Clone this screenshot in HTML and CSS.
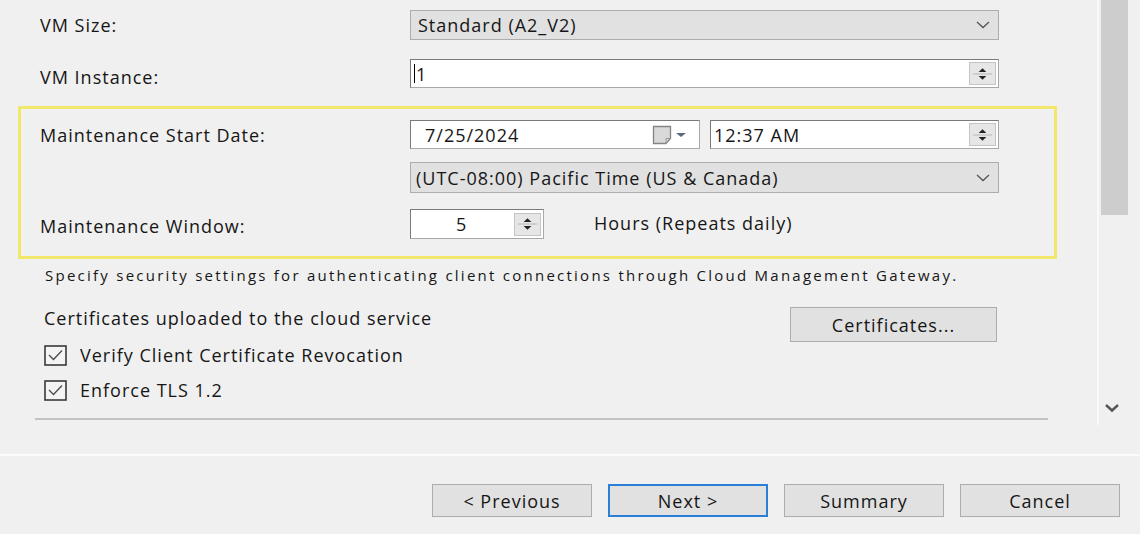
FILE: index.html
```html
<!DOCTYPE html>
<html lang="en">
<head>
<meta charset="utf-8">
<title>Cloud Management Gateway settings</title>
<link rel="stylesheet" href="styles.css">
</head>
<body>
<div class="window">
  <div class="main">
    <div class="content">
      <div class="row r-size">
        <span class="label">VM Size:</span>
        <div class="combo">
          <span class="combo-text">Standard (A2_V2)</span>
          <svg class="chev" width="14" height="8" viewBox="0 0 14 8"><polyline points="1,1 7,6.5 13,1" fill="none" stroke="#555" stroke-width="1.3"/></svg>
        </div>
      </div>
      <div class="row r-inst">
        <span class="label">VM Instance:</span>
        <div class="textbox">
          <span class="value"><span class="caret"></span>1</span>
          <div class="spin">
            <svg width="26" height="22" viewBox="0 0 26 22"><polygon points="9,9 17,9 13,5" fill="#222"/><line x1="3" y1="11" x2="23" y2="11" stroke="#b5b5b5"/><polygon points="9,13 17,13 13,17" fill="#222"/></svg>
          </div>
        </div>
      </div>
      <div class="highlight">
        <div class="row r-date">
          <span class="label">Maintenance Start Date:</span>
          <div class="datetime">
            <div class="textbox date">
              <span class="value">7/25/2024</span>
              <svg class="cal" width="40" height="22" viewBox="0 0 40 22"><path d="M1.5 2.5 H18.5 V14.5 L14 19.5 H1.5 Z" fill="#d9d9d9" stroke="#858585" stroke-width="1.3"/><path d="M14 19.5 V14.5 H18.5" fill="none" stroke="#9a9a9a"/><polygon points="24,9 34,9 29,13" fill="#5b6a82"/></svg>
            </div>
            <div class="textbox time">
              <span class="value">12:37 AM</span>
              <div class="spin">
                <svg width="26" height="22" viewBox="0 0 26 22"><polygon points="9,9 17,9 13,5" fill="#222"/><line x1="3" y1="11" x2="23" y2="11" stroke="#b5b5b5"/><polygon points="9,13 17,13 13,17" fill="#222"/></svg>
              </div>
            </div>
          </div>
        </div>
        <div class="row r-tz">
          <span class="label"></span>
          <div class="combo">
            <span class="combo-text">(UTC-08:00) Pacific Time (US &amp; Canada)</span>
            <svg class="chev" width="14" height="8" viewBox="0 0 14 8"><polyline points="1,1 7,6.5 13,1" fill="none" stroke="#555" stroke-width="1.3"/></svg>
          </div>
        </div>
        <div class="row r-win">
          <span class="label">Maintenance Window:</span>
          <div class="wingroup">
            <div class="textbox num">
              <span class="value">5</span>
              <div class="spin">
                <svg width="26" height="22" viewBox="0 0 26 22"><polygon points="9,9 17,9 13,5" fill="#222"/><line x1="3" y1="11" x2="23" y2="11" stroke="#b5b5b5"/><polygon points="9,13 17,13 13,17" fill="#222"/></svg>
              </div>
            </div>
            <span class="hours">Hours (Repeats daily)</span>
          </div>
        </div>
      </div>
      <p class="note">Specify security settings for authenticating client connections through Cloud Management Gateway.</p>
      <div class="certrow">
        <span class="certtext">Certificates uploaded to the cloud service</span>
        <button class="btn cert">Certificates...</button>
      </div>
      <div class="check c1">
        <svg class="box" width="23" height="21" viewBox="0 0 23 21"><rect x="1" y="1" width="21" height="19" fill="#f4f4f4" stroke="#3a3a3a" stroke-width="1.6"/><polyline points="5,10 9.5,14.5 18,5.5" fill="none" stroke="#4a4a4a" stroke-width="1.3"/></svg>
        <span>Verify Client Certificate Revocation</span>
      </div>
      <div class="check c2">
        <svg class="box" width="23" height="21" viewBox="0 0 23 21"><rect x="1" y="1" width="21" height="19" fill="#f4f4f4" stroke="#3a3a3a" stroke-width="1.6"/><polyline points="5,10 9.5,14.5 18,5.5" fill="none" stroke="#4a4a4a" stroke-width="1.3"/></svg>
        <span>Enforce TLS 1.2</span>
      </div>
      <div class="sep"></div>
    </div>
    <div class="scrollbar">
      <div class="thumb"></div>
      <svg class="down" width="16" height="10" viewBox="0 0 16 10"><polyline points="2,2 8,7.5 14,2" fill="none" stroke="#555" stroke-width="2.4"/></svg>
    </div>
  </div>
  <div class="divider"></div>
  <div class="footer">
    <button class="btn nav">&lt; Previous</button>
    <button class="btn nav default">Next &gt;</button>
    <button class="btn nav">Summary</button>
    <button class="btn nav">Cancel</button>
  </div>
  <div class="bottom"></div>
</div>
</body>
</html>
```

FILE: styles.css
```css
* { box-sizing: border-box; }
html, body {
  margin: 0;
  padding: 0;
  background: #f0f0f0;
}
body {
  font-family: "Open Sans", "Noto Sans", "Liberation Sans", sans-serif;
  font-size: 18px;
  letter-spacing: 1px;
  color: #161616;
  width: 1140px;
  height: 555px;
  overflow: hidden;
}
.window {
  width: 1140px;
  height: 555px;
  display: flex;
  flex-direction: column;
}
.main {
  height: 454px;
  display: flex;
}
.content {
  flex: 1;
  padding-top: 10px;
  display: flex;
  flex-direction: column;
}
.row {
  display: grid;
  grid-template-columns: 370px 589px;
  padding-left: 40px;
  align-items: center;
}
.label {
  line-height: 20px;
  white-space: nowrap;
}
.r-size { height: 30px; }
.r-size .label { margin-top: -1px; }
.r-inst { height: 29px; margin-top: 19px; }
.r-inst .label { margin-top: 6px; }

.combo {
  height: 100%;
  background: #e1e1e1;
  border: 1px solid #adadad;
  display: flex;
  align-items: center;
  justify-content: space-between;
  padding: 0 8px 0 7px;
}
.combo-text { white-space: nowrap; }

.textbox {
  height: 100%;
  background: #fff;
  border: 1px solid #7a7a7a;
  border-right-color: #a8a8a8;
  border-bottom-color: #a8a8a8;
  display: flex;
  align-items: center;
  justify-content: space-between;
  padding: 0 2px 0 3px;
}
.value { white-space: nowrap; display: flex; align-items: center; }
.caret {
  display: inline-block;
  width: 1px;
  height: 19px;
  background: #000;
  margin-right: 1px;
}
.spin {
  width: 27px;
  height: 23px;
  background: #e6e6e6;
  border: 1px solid #c4c4c4;
  display: flex;
  align-items: center;
  justify-content: center;
}
.spin svg { display: block; }

.highlight {
  margin-top: 18px;
  margin-left: 18px;
  width: 1039px;
  border: 3px solid #f1e76a;
  padding: 11px 0 17px 0;
}
.highlight .row { padding-left: 19px; }
.r-date { height: 29px; }
.r-date .label { margin-top: 1px; }
.datetime {
  height: 100%;
  display: flex;
  gap: 10px;
}
.date { width: 290px; padding-left: 14px; }
.date .cal { margin-right: 5px; }
.time { flex: 1; }
.r-tz { height: 31px; margin-top: 13px; }
.r-tz .combo { padding-left: 5px; }
.r-win { height: 30px; margin-top: 16px; }
.r-win .label { margin-top: 3px; }
.wingroup {
  height: 100%;
  display: flex;
  align-items: center;
}
.num {
  width: 134px;
  padding-left: 45px;
}
.hours {
  margin-left: 50px;
  margin-top: -2px;
  white-space: nowrap;
}

.note {
  margin: 6px 0 0 45px;
  font-size: 15px;
  letter-spacing: 2.25px;
  line-height: 20px;
  white-space: nowrap;
}
.certrow {
  margin-top: 22px;
  height: 35px;
  display: flex;
  align-items: flex-start;
  padding-left: 44px;
}
.certtext {
  line-height: 22px;
  width: 746px;
  white-space: nowrap;
}
.btn {
  font-family: inherit;
  font-size: 18px;
  letter-spacing: 1px;
  color: #161616;
  background: #e1e1e1;
  border: 1px solid #adadad;
  padding: 0;
  margin: 0;
}
.cert {
  width: 207px;
  height: 35px;
}
.check {
  display: flex;
  align-items: center;
  height: 22px;
  padding-left: 44px;
  gap: 13px;
  white-space: nowrap;
}
.check .box { display: block; }
.c1 { margin-top: 2px; }
.c2 { margin-top: 13px; }
.sep {
  margin: 17px 0 0 35px;
  width: 1013px;
  height: 2px;
  background: #c2c2c2;
}

.scrollbar {
  width: 43px;
  height: 425px;
  border-left: 2px solid #f9f9f9;
  position: relative;
  padding-left: 2px;
}
.thumb {
  width: 27px;
  height: 215px;
  background: #cdcdcd;
}
.down {
  position: absolute;
  left: 5px;
  top: 403px;
}

.divider {
  height: 2px;
  background: #fbfbfb;
}
.footer {
  height: 78px;
  display: flex;
  justify-content: flex-end;
  align-items: flex-start;
  gap: 16px;
  padding: 28px 20px 0 0;
}
.nav {
  width: 160px;
  height: 33px;
}
.default {
  border: 2px solid #2c7fd6;
}
.bottom {
  flex: 1;
  background: #fff;
}
```
